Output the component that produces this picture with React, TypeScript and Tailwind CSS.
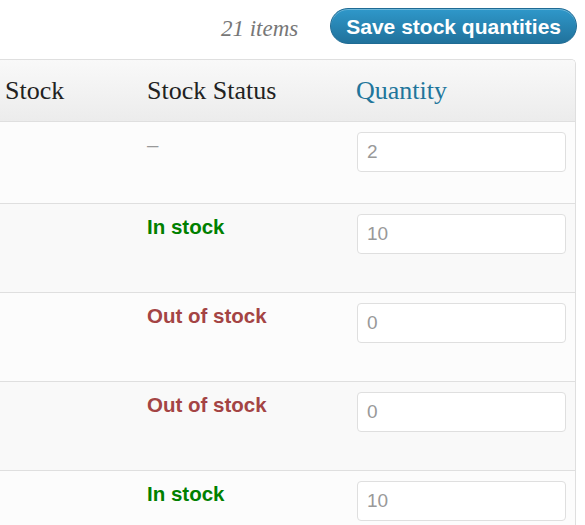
const rows = [
  { status: "none", qty: "2", h: "h-[82px]" },
  { status: "in", qty: "10", h: "h-[89px]" },
  { status: "out", qty: "0", h: "h-[89px]" },
  { status: "out", qty: "0", h: "h-[89px]" },
  { status: "in", qty: "10", h: "h-[89px]" },
];

function Status({ status }: { status: string }) {
  if (status === "in")
    return <span className="font-bold text-[#008000]">In stock</span>;
  if (status === "out")
    return <span className="font-bold text-[#a44444]">Out of stock</span>;
  return <span className="text-[#999]">–</span>;
}

export default function App() {
  return (
    <div className="h-[525px] w-[585px] overflow-hidden bg-white font-['Liberation_Sans',Arial,sans-serif]">
      {/* Top nav */}
      <div className="flex h-[59px] items-start justify-end pr-[8px] pt-[8px]">
        <span className="mr-[32px] mt-[4px] font-['Liberation_Serif',Georgia,serif] text-[23px] italic text-[#777]">
          21 items
        </span>
        <button className="h-[36px] rounded-[18px] border border-[#1f6b94] bg-gradient-to-b from-[#2f98ca] to-[#21729c] px-[15px] text-[21px] font-bold leading-none text-white shadow-[inset_0_1px_0_rgba(255,255,255,0.3)]">
          Save stock quantities
        </button>
      </div>

      {/* Table */}
      <div className="mr-[9px] overflow-hidden rounded-tr-[5px] border-r border-t border-[#dfdfdf]">
        <div className="flex h-[62px] items-center border-b border-[#dfdfdf] bg-gradient-to-b from-[#f9f9f9] to-[#ececec] font-['Liberation_Serif',Georgia,serif] text-[26px] text-[#222]">
          <div className="w-[147px] pl-[5px]">Stock</div>
          <div className="w-[209px]">Stock Status</div>
          <div className="text-[#21759b]">Quantity</div>
        </div>
        {rows.map((r, i) => (
          <div
            key={i}
            className={`flex items-start border-b border-[#dfdfdf] ${r.h} ${
              i % 2 === 0 ? "bg-[#fcfcfc]" : "bg-[#f9f9f9]"
            }`}
          >
            <div className="w-[147px]" />
            <div className="w-[210px] pt-[8px] text-[20.5px]">
              <Status status={r.status} />
            </div>
            <div className="pt-[10px]">
              <div className="flex h-[40px] w-[209px] items-center rounded-[4px] border border-[#dfdfdf] bg-white pl-[9px] text-[19px] text-[#999]">
                {r.qty}
              </div>
            </div>
          </div>
        ))}
      </div>
    </div>
  );
}
